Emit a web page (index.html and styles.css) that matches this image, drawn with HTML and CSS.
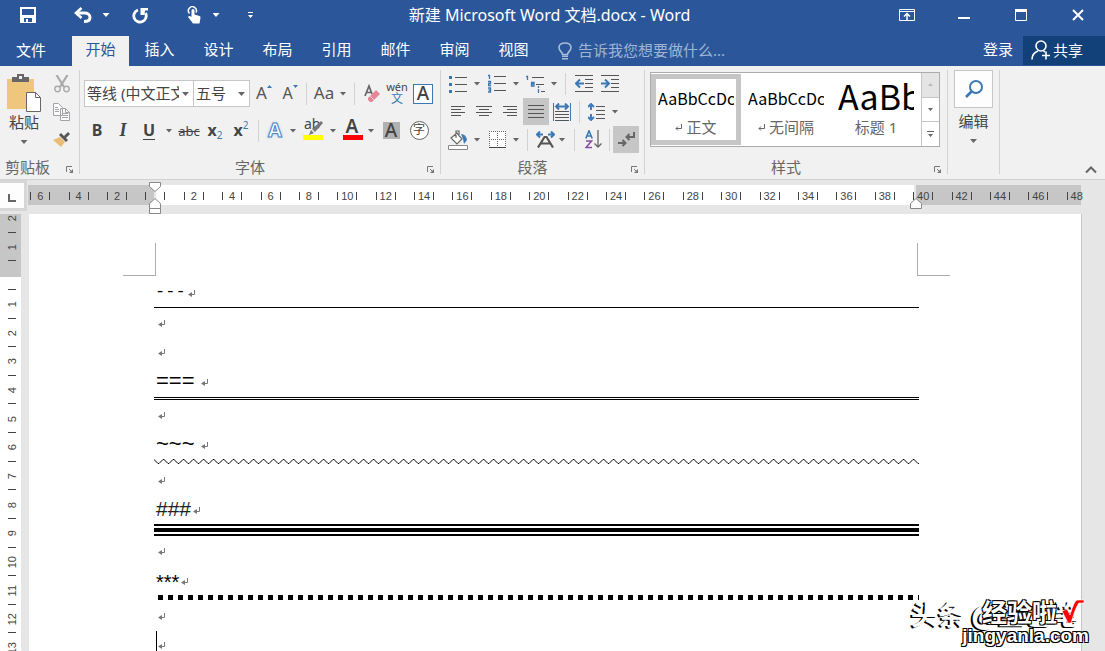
FILE: index.html
```html
<!DOCTYPE html>
<html lang="zh-CN">
<head>
<meta charset="utf-8">
<title>新建 Microsoft Word 文档.docx - Word</title>
<link rel="stylesheet" href="styles.css">
</head>
<body>
<header class="app-head">
  <div class="title-row">
    <div class="quick">
      <button class="b26" aria-label="保存"><svg width="16" height="16" viewBox="0 0 16 16"><path fill="#fff" fill-rule="evenodd" d="M0 0h16v16H0zM2 2v6h12V2zM4 11v4h2v-3h2v3h4v-4z"/></svg></button>
      <button class="b28 gap-l" aria-label="撤消"><svg width="18" height="16" viewBox="0 0 18 16"><path fill="none" stroke="#fff" stroke-width="3" d="M2 6h8.500c3 0 5.500 1.500 5.500 4.500S14 14.500 10 14.500"/><path fill="none" stroke="#fff" stroke-width="2.600" d="M7.500 1 2 6l5.500 5"/></svg></button>
      <button class="b18" aria-label="撤消选项"><span class="caret light"></span></button>
      <button class="b26 gap-s" aria-label="重复"><svg width="17" height="17" viewBox="0 0 17 17"><path fill="none" stroke="#fff" stroke-width="2.800" d="M6 3A6.200 6.200 0 1 0 13.500 6"/><path fill="#fff" d="M8.500 1H16v2.500h-3L12.500 8H8.500z"/></svg></button>
      <button class="b26 gap-l" aria-label="触摸/鼠标模式"><svg width="14" height="18" viewBox="0 0 14 18"><path fill="none" stroke="#fff" stroke-width="1.500" d="M2.500 7.500a4 4 0 1 1 6.500-1"/><path fill="#fff" d="M4.500 4.500a1.500 1.500 0 0 1 3 0v4l5 1.500q1 .4 1 1.500l-1 6H6l-5-6.500q.6-1.500 2-1l1.500 1z"/></svg></button>
      <button class="b18" aria-label="模式选项"><span class="caret light"></span></button>
      <button class="b18 gap-m" aria-label="自定义快速访问工具栏"><svg width="5" height="7" viewBox="0 0 5 7"><path fill="#fff" d="M0 0h5v1H0zM0 3h5L2.500 6z"/></svg></button>
    </div>
    <h1 class="doc-title">新建 Microsoft Word 文档.docx - Word</h1>
    <div class="window-controls">
      <button aria-label="功能区显示选项"><svg width="16" height="12" viewBox="0 0 16 12"><path fill="none" stroke="#fff" d="M.5.5h15v11H.5zM.5 2.500h15"/><path fill="none" stroke="#fff" stroke-width="1.500" d="M8 11V5M5 7.500l3-3 3 3"/></svg></button>
      <button aria-label="最小化"><svg width="12" height="12" viewBox="0 0 12 12"><path fill="#fff" d="M0 8h12v2H0z"/></svg></button>
      <button aria-label="最大化"><svg width="12" height="12" viewBox="0 0 12 12"><path fill="none" stroke="#fff" d="M.5.5h11v11H.5z"/><path fill="#fff" d="M0 0h12v3H0z"/></svg></button>
      <button aria-label="关闭"><svg width="12" height="12" viewBox="0 0 12 12"><path fill="none" stroke="#fff" stroke-width="2" d="M1 1l10 10M11 1 1 11"/></svg></button>
    </div>
  </div>
  <nav class="tab-row">
    <button class="tab file">文件</button>
    <button class="tab active">开始</button>
    <button class="tab">插入</button>
    <button class="tab">设计</button>
    <button class="tab">布局</button>
    <button class="tab">引用</button>
    <button class="tab">邮件</button>
    <button class="tab">审阅</button>
    <button class="tab">视图</button>
    <label class="tell-me">
      <svg width="14" height="18" viewBox="0 0 14 18"><path fill="none" stroke="#a9bcda" stroke-width="1.600" d="M4.500 12.500c0-2.500-3.500-3.500-3.500-7C1 2.800 3.500 1 7 1s6 1.800 6 4.500c0 3.500-3.500 4.500-3.500 7z"/><path fill="#a9bcda" d="M4 13.500h6V15H4zM4 16h6v1.500H4z"/></svg>
      <input type="text" placeholder="告诉我您想要做什么..." aria-label="告诉我您想要做什么">
    </label>
    <button class="sign-in">登录</button>
    <button class="share"><svg width="20" height="20" viewBox="0 0 20 20"><g fill="none" stroke="#fff" stroke-width="1.600"><circle cx="10" cy="6" r="5"/><path d="M1 19.500c0-4.500 2-7 6-8.500M12.500 11l1.500 1M15 11.500v8M11 15.500h8"/></g></svg>共享</button>
  </nav>
</header>

<section class="ribbon" aria-label="开始">
  <div class="group clipboard">
    <div class="body clip-body">
      <button class="tall paste">
        <svg width="35" height="38" viewBox="0 0 35 38"><path fill="#eec77c" d="M0 5h27v30H0z"/><path fill="#666" d="M5 3h5V0h7v3h5v5H5z"/><path fill="#f1f1f1" d="M12 2h3v3h-3z"/><path fill="#fff" stroke="#666" d="M19.500 18.500h9l5 5v14h-14z"/><path fill="none" stroke="#666" d="M28.500 18.500v5h5"/></svg>
        <span>粘贴</span><span class="caret"></span>
      </button>
      <div class="clip-tools">
        <button class="tool" aria-label="剪切"><svg width="16" height="18" viewBox="0 0 16 18"><g fill="none" stroke="#aaa"><path stroke-width="2.200" d="M2.500 0 10 12M13.500 0 6 12"/><circle cx="3.500" cy="14" r="2.700" stroke-width="1.400"/><circle cx="12.500" cy="14" r="2.700" stroke-width="1.400"/></g></svg></button>
        <button class="tool" aria-label="复制"><svg width="17" height="18" viewBox="0 0 17 18"><g fill="#fafafa" stroke="#a5a1a8"><path d="M.5.5h5l4 4v8h-9zM7.500 5.500h5l4 4v8h-9z"/><path fill="none" d="M2 4.500h3M2 6.500h4M2 8.500h4M9 10.500h6M9 12.500h6M9 14.500h6M12.500 5.500v4h4"/></g></svg></button>
        <button class="tool" aria-label="格式刷"><svg width="17" height="16" viewBox="0 0 17 16"><path fill="#e9bd77" d="M0 8 7 5l5 5-4 5z"/><path fill="#555" d="m6 3 2-2 7 7-2 2zM11 4l4-4 2 2-4 4z"/></svg></button>
      </div>
    </div>
    <div class="caption"><span>剪贴板</span><button class="launch" aria-label="剪贴板选项"><svg width="7" height="7" viewBox="0 0 7 7"><path fill="none" stroke="#777" d="M.5 6V.5H6M3 3l2 2"/><path fill="#777" d="M7 3v4H3z"/></svg></button></div>
  </div>

  <div class="group font">
    <div class="body font-body">
      <div class="row">
        <div class="combo family"><select aria-label="字体"><option>等线 (中文正文)</option></select><span class="caret"></span></div>
        <div class="combo size"><select aria-label="字号"><option>五号</option></select><span class="caret"></span></div>
        <button class="b28 letter" aria-label="增大字号">A<svg class="step" width="5" height="3" viewBox="0 0 5 3"><path fill="#3c78b4" d="M0 3 2.500 0 5 3z"/></svg></button>
        <button class="b24 letter small" aria-label="减小字号">A<svg class="step" width="5" height="3" viewBox="0 0 5 3"><path fill="#3c78b4" d="M0 0h5L2.500 3z"/></svg></button>
        <i class="sep s8"></i>
        <button class="b28 letter aa" aria-label="更改大小写">Aa</button><button class="b10" aria-label="大小写选项"><span class="caret"></span></button>
        <i class="sep s12"></i>
        <button class="b24" aria-label="清除格式"><svg width="17" height="19" viewBox="0 0 17 19"><path fill="none" stroke="#666" stroke-width="1.700" d="M1 12 5 2l3 8M2.500 8.500H7"/><path fill="#e78696" d="m4 14 8-8 4 4-8 8H6l-2-2z"/><path stroke="#f6ccd2" d="m6 12 4 4"/></svg></button>
        <button class="b26 pinyin" aria-label="拼音指南"><span>wén</span><b>文</b></button>
        <button class="b26" aria-label="字符边框"><span class="boxed">A</span></button>
      </div>
      <div class="row">
        <button class="b26 glyph bold">B</button>
        <button class="b26 glyph italic">I</button>
        <button class="b26 glyph under">U</button><button class="b14" aria-label="下划线选项"><span class="caret"></span></button>
        <button class="b26 glyph strike">abc</button>
        <button class="b26 glyph script">x<sub>2</sub></button>
        <button class="b26 glyph script">x<sup>2</sup></button>
        <i class="sep s8"></i>
        <button class="b26 glyph effect">A</button><button class="b10" aria-label="文本效果选项"><span class="caret"></span></button>
        <button class="b30 swatch yellow" aria-label="突出显示"><span>ab</span><svg class="pen" width="15" height="15" viewBox="0 0 15 15"><path fill="#777" d="M13 0l2 2-8 9-3-3zM3 9l3 3-5 2z"/></svg></button><button class="b10" aria-label="突出显示选项"><span class="caret"></span></button>
        <button class="b28 swatch red" aria-label="字体颜色"><b>A</b></button><button class="b10" aria-label="字体颜色选项"><span class="caret"></span></button>
        <button class="b30" aria-label="字符底纹"><span class="shade">A</span></button>
        <button class="b26" aria-label="带圈字符"><span class="ring">字</span></button>
      </div>
    </div>
    <div class="caption"><span>字体</span><button class="launch" aria-label="字体选项"><svg width="7" height="7" viewBox="0 0 7 7"><path fill="none" stroke="#777" d="M.5 6V.5H6M3 3l2 2"/><path fill="#777" d="M7 3v4H3z"/></svg></button></div>
  </div>

  <div class="group para">
    <div class="body para-body">
      <div class="row">
        <button class="b26" aria-label="项目符号"><svg width="18" height="18" viewBox="0 0 18 18"><path stroke="#555" d="M6 2.500h12M6 9.500h12M6 16.500h12"/><path fill="#3c78b4" d="M0 1h3v3H0zM0 8h3v3H0zM0 15h3v3H0z"/></svg></button><button class="b12" aria-label="符号选项"><span class="caret"></span></button>
        <button class="b28" aria-label="编号"><svg width="18" height="19" viewBox="0 0 18 19"><path stroke="#555" d="M6 2.500h12M6 9.500h12M6 16.500h12"/><path fill="none" stroke="#3c78b4" stroke-width="1.300" d="M0 1.500h1.500V5M0 7.500h2.500v2H.5v2H3M0 14h2.500v4H0M.5 16h2"/></svg></button><button class="b10" aria-label="编号选项"><span class="caret"></span></button>
        <button class="b28" aria-label="多级列表"><svg width="19" height="18" viewBox="0 0 19 18"><path stroke="#555" d="M6 2.500h12M10 9.500h8M15 16.500h4"/><path fill="none" stroke="#3c78b4" stroke-width="1.300" d="M0 1.500h1.500V5M5 7.500h3V11H5.500V9H8M12.500 14v4M12.500 11v2"/></svg></button><button class="b10" aria-label="列表选项"><span class="caret"></span></button>
        <i class="sep s12"></i>
        <button class="b26" aria-label="减少缩进量"><svg width="18" height="17" viewBox="0 0 18 17"><path stroke="#555" d="M0 .5h18M10 4.500h8M10 8.500h8M10 12.500h8M0 16.500h18"/><path fill="none" stroke="#3c78b4" stroke-width="2" d="M1 8.500h8M5 4.500l-4 4 4 4"/></svg></button>
        <button class="b26" aria-label="增加缩进量"><svg width="18" height="17" viewBox="0 0 18 17"><path stroke="#555" d="M0 .5h18M10 4.500h8M10 8.500h8M10 12.500h8M0 16.500h18"/><path fill="none" stroke="#3c78b4" stroke-width="2" d="M0 8.500h8M4 4.500l4 4-4 4"/></svg></button>
      </div>
      <div class="row">
        <button class="b26" aria-label="左对齐"><svg width="14" height="11" viewBox="0 0 14 11"><path stroke="#555" d="M0 .5h14M0 3.500h10M0 6.500h14M0 9.500h10"/></svg></button>
        <button class="b26" aria-label="居中"><svg width="16" height="11" viewBox="0 0 16 11"><path stroke="#555" d="M0 .5h16M3 3.500h10M0 6.500h16M3 9.500h10"/></svg></button>
        <button class="b26" aria-label="右对齐"><svg width="14" height="11" viewBox="0 0 14 11"><path stroke="#555" d="M0 .5h14M4 3.500h10M0 6.500h14M4 9.500h10"/></svg></button>
        <button class="b26 on" aria-label="两端对齐"><svg width="16" height="14" viewBox="0 0 16 14"><path stroke="#555" d="M0 .5h16M0 4.500h16M0 8.500h16M0 12.500h16"/></svg></button>
        <button class="b26" aria-label="分散对齐"><svg width="18" height="18" viewBox="0 0 18 18"><path stroke="#3c78b4" d="M.5 0v18M17.500 0v18"/><path stroke="#3c78b4" stroke-width="2" fill="none" d="M3 3.500h12M6 .5l-3 3 3 3M12 .5l3 3-3 3"/><path stroke="#555" d="M2 8.500h14M2 11.500h14M2 14.500h14M2 17.500h14"/></svg></button>
        <i class="sep s8"></i>
        <button class="b26" aria-label="行距"><svg width="17" height="18" viewBox="0 0 17 18"><path fill="none" stroke="#3f7cc4" stroke-width="2" d="M3 1v6M3 11v6M0 4l3-3 3 3M0 14l3 3 3-3"/><path stroke="#555" d="M8 3.500h9M8 7.500h9M8 11.500h9M8 15.500h9"/></svg></button><button class="b12" aria-label="行距选项"><span class="caret"></span></button>
      </div>
      <div class="row">
        <button class="b26" aria-label="底纹"><svg width="20" height="20" viewBox="0 0 20 20"><path fill="#fff" stroke="#666" stroke-width="1.200" d="m3 8 6-5 5 6-5 5zM8 8V1h3v5"/><path fill="#3c78b4" d="M13 4q5 0 6 6l-3 4-1-5z"/><path fill="#fff" stroke="#888" d="M.5 15.500h19v4H.5z"/></svg></button><button class="b12" aria-label="底纹选项"><span class="caret"></span></button>
        <button class="b28" aria-label="边框"><svg width="17" height="17" viewBox="0 0 17 17"><path fill="#fff" d="M0 0h17v16H0z"/><path fill="none" stroke="#666" stroke-dasharray="1 1" d="M0 .5h17M.5 0v16M16.500 0v16M8.500 0v16M0 8.500h17"/><path stroke="#444" d="M0 16.500h17"/></svg></button><button class="b10" aria-label="边框选项"><span class="caret"></span></button>
        <i class="sep s12"></i>
        <button class="b24" aria-label="中文版式"><svg width="19" height="17" viewBox="0 0 19 17"><path fill="none" stroke="#3c78b4" stroke-width="2" d="M1 3.500h6M4 .5l-3 3 3 3M12 3.500h6M15 .5l3 3-3 3"/><path fill="none" stroke="#555" stroke-width="2.200" d="M2 16.500 8.500 6h2L17 16.500M5 12.500h9"/></svg></button><button class="b10" aria-label="版式选项"><span class="caret"></span></button>
        <i class="sep s14"></i>
        <button class="b24" aria-label="排序"><svg width="17" height="19" viewBox="0 0 17 19"><path fill="none" stroke="#3c78b4" stroke-width="1.600" d="M.8 8.500 4 .8l3.200 7.700M2 6h4"/><path fill="none" stroke="#8650a8" stroke-width="1.600" d="M1 11h5.500L1 17.500h6"/><path fill="none" stroke="#666" stroke-width="1.300" d="M13 0v17M9.500 13.500 13 17l3.500-3.500"/></svg></button>
        <i class="sep s8"></i>
        <button class="b26 on" aria-label="显示编辑标记"><svg width="17" height="15" viewBox="0 0 17 15"><path fill="none" stroke="#666" stroke-width="2" d="M16 0v5H9M11.500 2 8.500 5l3 3M0 11h7M4.500 8l3 3-3 3"/></svg></button>
      </div>
    </div>
    <div class="caption"><span>段落</span><button class="launch" aria-label="段落选项"><svg width="7" height="7" viewBox="0 0 7 7"><path fill="none" stroke="#777" d="M.5 6V.5H6M3 3l2 2"/><path fill="#777" d="M7 3v4H3z"/></svg></button></div>
  </div>

  <div class="group styles">
    <div class="body">
      <div class="gallery">
        <button class="style-card chosen"><span class="sample">AaBbCcDc</span><span class="style-name"><svg width="7" height="7" viewBox="0 0 7 7"><path fill="none" stroke="#666" d="M6.500 0v4.500H1M3 2.500l-2 2 2 2"/></svg> 正文</span></button>
        <button class="style-card"><span class="sample">AaBbCcDc</span><span class="style-name"><svg width="7" height="7" viewBox="0 0 7 7"><path fill="none" stroke="#666" d="M6.500 0v4.500H1M3 2.500l-2 2 2 2"/></svg> 无间隔</span></button>
        <button class="style-card"><span class="sample big">AaBb</span><span class="style-name">标题 1</span></button>
        <div class="scroller">
          <button class="off" aria-label="上一行"><svg width="5" height="3" viewBox="0 0 5 3"><path fill="#bbb" d="M0 3 2.500 0 5 3z"/></svg></button>
          <button aria-label="下一行"><svg width="5" height="3" viewBox="0 0 5 3"><path fill="#666" d="M0 0h5L2.500 3z"/></svg></button>
          <button aria-label="其他样式"><svg width="7" height="7" viewBox="0 0 7 7"><path fill="#666" d="M0 0h7v1H0zM1 3h5L3.500 6z"/></svg></button>
        </div>
      </div>
    </div>
    <div class="caption"><span>样式</span><button class="launch" aria-label="样式选项"><svg width="7" height="7" viewBox="0 0 7 7"><path fill="none" stroke="#777" d="M.5 6V.5H6M3 3l2 2"/><path fill="#777" d="M7 3v4H3z"/></svg></button></div>
  </div>

  <div class="group editing">
    <button class="tall">
      <span class="find"><svg width="18" height="18" viewBox="0 0 18 18"><g fill="none" stroke="#3c78b4" stroke-width="2"><circle cx="11" cy="7" r="6"/><path stroke-width="2.600" d="M6.500 11.500 1 17"/></g></svg></span>
      <span>编辑</span><span class="caret"></span>
    </button>
  </div>
  <button class="collapse" aria-label="折叠功能区"><svg width="12" height="8" viewBox="0 0 12 8"><path fill="none" stroke="#666" stroke-width="2" d="m1 6.500 5-5 5 5"/></svg></button>
</section>

<div class="ruler-row">
  <div class="corner"><button aria-label="制表符"><svg width="8" height="8" viewBox="0 0 8 8"><path fill="none" stroke="#666" stroke-width="2" d="M1 0v7h7"/></svg></button></div>
  <div class="ruler">
    <div class="zone margin-left"></div>
    <div class="zone text-zone">
      <svg class="marker first" width="12" height="32" viewBox="0 0 12 32"><g fill="#fff" stroke="#888"><path d="M.5.5h11v4l-5.500 5-5.500-5zM.5 26.500v-5l5.500-5 5.500 5v5zM.5 26.500h11v5H.5z"/></g></svg>
      <svg class="marker last" width="12" height="11" viewBox="0 0 12 11"><path fill="#fff" stroke="#888" d="M.5 10.500v-5l5.500-5 5.500 5v5z"/></svg>
    </div>
    <div class="zone margin-right"></div>
    <ol class="scale" id="scale-x"></ol>
  </div>
</div>

<main class="workspace">
  <div class="ruler-y"><ol class="scale-y" id="scale-y"></ol></div>
  <article class="page">
    <div class="crops"><i class="crop left"></i><i class="crop right"></i></div>
    <p class="line ruled dashes">---<svg class="ret"><use href="#ret"/></svg></p>
    <div class="rule single"></div>
    <p class="line"><svg class="ret"><use href="#ret"/></svg></p>
    <p class="line"><svg class="ret"><use href="#ret"/></svg></p>
    <p class="line ruled equals">===<svg class="ret"><use href="#ret"/></svg></p>
    <div class="rule double"></div>
    <p class="line"><svg class="ret"><use href="#ret"/></svg></p>
    <p class="line ruled equals">~~~<svg class="ret"><use href="#ret"/></svg></p>
    <svg class="rule wave"><defs><pattern id="zig" width="10" height="6" patternUnits="userSpaceOnUse"><path fill="none" stroke="#000" d="M-1-.5 0 .5 4 4.500h1l4-4h1l1 1"/></pattern></defs><rect width="100%" height="6" fill="url(#zig)"/></svg>
    <p class="line"><svg class="ret"><use href="#ret"/></svg></p>
    <p class="line ruled hashes">###<svg class="ret"><use href="#ret"/></svg></p>
    <div class="rule triple"></div>
    <p class="line"><svg class="ret"><use href="#ret"/></svg></p>
    <p class="line ruled stars">***<svg class="ret"><use href="#ret"/></svg></p>
    <div class="rule dots"></div>
    <p class="line"><svg class="ret"><use href="#ret"/></svg></p>
    <p class="line current"><svg class="ret"><use href="#ret"/></svg></p>
  </article>
</main>

<div class="watermark" aria-hidden="true">
  <span class="wm-back">头条 @兰已笔</span>
  <span class="wm-name">经验啦</span>
  <svg class="wm-tick" width="24" height="26" viewBox="0 0 24 26"><path fill="#f00" stroke="#fff" stroke-width=".6" d="M1 12l5-2 3 6Q13 2 16 1h7v3h-5Q15 7 10 24H7z"/></svg>
  <span class="wm-site">jingyanla.com</span>
</div>

<svg class="defs" width="0" height="0"><symbol id="ret" viewBox="0 0 8 8"><path fill="none" stroke="#777" d="M6.500 0v4.500H1"/><path fill="#777" d="M4 2v5L0 4.500z"/></symbol></svg>
<script src="rulers.js"></script>
</body>
</html>
```
FILE: rulers.js
```js
const fill = (id, from, to, step) => {
  const list = document.getElementById(id);
  for (let n = from; n <= to; n += step) {
    const item = document.createElement('li');
    const mark = document.createElement('span');
    mark.textContent = n === 0 ? '' : Math.abs(n);
    item.append(mark);
    list.append(item);
  }
};
fill('scale-x', -6, 48, 2);
fill('scale-y', -2, 13, 1);
```
FILE: styles.css
```css
* { box-sizing: border-box; }
body {
  margin: 0;
  height: 100vh;
  display: flex;
  flex-direction: column;
  overflow: hidden;
  position: relative;
  background: #e6e6e6;
  color: #444;
  font: 15px/20px "Noto Sans", "Noto Sans CJK SC", sans-serif;
}
button, input, select { font: inherit; color: inherit; border: 0; padding: 0; margin: 0; background: none; }
button { display: flex; align-items: center; justify-content: center; flex: none; }
svg { flex: none; display: block; }
ol { list-style: none; margin: 0; padding: 0; }

.b10 { width: 10px; } .b12 { width: 12px; } .b14 { width: 14px; } .b18 { width: 18px; }
.b24 { width: 24px; } .b26 { width: 26px; } .b28 { width: 28px; } .b30 { width: 30px; }
.caret { width: 7px; height: 4px; flex: none; background: #666; clip-path: polygon(0 0, 100% 0, 50% 100%); }
.caret.light { background: #fff; }

/* title bar */
.app-head { background: #2b579a; color: #fff; flex: none; }
.title-row { display: grid; grid-template-columns: 1fr auto 1fr; height: 36px; padding-bottom: 8px; }
.quick { display: flex; padding-left: 15px; }
.gap-s { margin-left: 12px; } .gap-m { margin-left: 16px; } .gap-l { margin-left: 28px; }
.doc-title { margin: 0 6px 0 0; font-size: 16px; font-weight: 400; line-height: 30px; }
.window-controls { display: flex; justify-content: flex-end; }
.window-controls button { width: 57px; padding-left: 2px; }

.tab-row { display: flex; height: 30px; gap: 2px; }
.tab { width: 57px; padding-bottom: 4px; }
.tab.file { width: 62px; margin-right: 8px; padding-bottom: 2px; }
.tab.active { background: #f1f1f1; color: #2b579a; }
.tell-me { display: flex; flex: 1; align-items: center; gap: 6px; margin-left: 14px; }
.tell-me input { flex: 1; min-width: 0; outline: 0; padding-bottom: 2px; }
.tell-me input::placeholder { color: #a0b5d5; opacity: 1; }
.sign-in { width: 46px; padding-bottom: 4px; }
.share { width: 82px; height: 29px; background: #124078; gap: 2px; justify-content: flex-start; padding: 0 0 2px 8px; }

/* ribbon */
.ribbon { display: flex; flex: none; height: 114px; padding: 4px 0 5px; background: #f1f1f1; border-bottom: 1px solid #d2d2d2; }
.group { display: flex; flex-direction: column; border-right: 1px solid #d2d2d2; }
.body { flex: 1; }
.row { display: flex; }
.sep { height: 22px; align-self: center; flex: none; background: linear-gradient(#d2d2d2, #d2d2d2) center / 1px 100% no-repeat; }
.s8 { width: 8px; } .s12 { width: 12px; } .s14 { width: 14px; }
.caption { display: flex; height: 12px; line-height: 10px; color: #666; }
.caption span { flex: 1; text-align: center; }
.launch { width: 20px; height: 14px; }
.tall { flex-direction: column; justify-content: flex-start; }
.tall .caret { margin-top: 8px; }

.clipboard { width: 80px; }
.clipboard .caption span { margin-right: 4px; }
.clip-body { display: flex; }
.paste { width: 48px; padding: 4px 0 0 4px; }
.paste svg { margin-right: 3px; }
.paste span { margin-right: 4px; }
.clip-tools { display: flex; flex-direction: column; gap: 1px; }
.tool { width: 27px; height: 27px; }

.font { width: 361px; }
.font-body { padding: 10px 0 0 4px; display: flex; flex-direction: column; gap: 10px; }
.font-body .row { height: 27px; }
.combo { position: relative; flex: none; background: #fff; border: 1px solid #c6c6c6; }
.combo select { appearance: none; outline: 0; width: 100%; height: 100%; padding: 0 14px 2px 2px; overflow: hidden; text-overflow: clip; white-space: nowrap; }
.combo .caret { position: absolute; right: 4px; top: 11px; pointer-events: none; }
.family { width: 110px; }
.size { width: 57px; margin-left: -1px; }
.letter { font-size: 17px; color: #555; padding-bottom: 2px; }
.letter.small { font-size: 16px; }
.letter .step { align-self: flex-start; margin-top: 5px; }
.pinyin { flex-direction: column; font-size: 11px; line-height: 10px; }
.pinyin b { color: #3c78b4; font-size: 12px; line-height: 13px; font-weight: 400; }
.boxed { width: 20px; height: 20px; border: 1px solid #3c78b4; background: #fff; font-size: 19px; line-height: 17px; font-weight: 500; }
.glyph { font-size: 16px; color: #444; padding-bottom: 2px; }
.bold { font-weight: 700; }
.italic { font: italic 700 18px/20px "Liberation Serif", serif; }
.under { font-weight: 700; text-decoration: underline; text-underline-offset: 3px; }
.strike { font-size: 13px; text-decoration: line-through; padding-bottom: 0; }
.script { font-weight: 700; }
.script sub, .script sup { font-size: 10px; line-height: 10px; color: #3c78b4; font-weight: 400; }
.script sub { align-self: flex-end; margin-bottom: 2px; }
.script sup { align-self: flex-start; margin-top: 3px; }
.effect { color: #fff; font-size: 20px; font-weight: 700; -webkit-text-stroke: 1px #4a84c4; text-shadow: 0 0 3px #7fb2e6; }
.swatch { position: relative; align-items: flex-start; font-size: 14px; line-height: 14px; }
.swatch::after { content: ""; position: absolute; left: 5px; top: 18px; width: 20px; height: 5px; background: #ff0; }
.swatch.yellow { justify-content: flex-start; padding-left: 6px; }
.swatch.red::after { background: #f00; }
.swatch b { font-size: 19px; line-height: 18px; font-weight: 600; }
.pen { position: absolute; left: 10px; top: 4px; }
.shade { width: 17px; height: 17px; background: #b1b1b1; font-size: 19px; font-weight: 500; line-height: 16px; }
.ring { width: 19px; height: 19px; border: 1px solid #666; border-radius: 50%; font-size: 12px; line-height: 16px; background: #fff; }

.para { width: 204px; }
.para-body { display: flex; flex-direction: column; gap: 1px; padding-left: 4px; }
.para-body .row { height: 27px; }
.on { background: #c6c6c6; }

.styles { width: 303px; }
.gallery { display: flex; height: 75px; margin: 2px 7px 0 5px; border: 1px solid #ababab; background: #fff; }
.style-card { flex: 1; min-width: 0; height: 71px; flex-direction: column; justify-content: flex-start; border: 5px solid transparent; margin-top: 1px; padding: 0 2px; }
.style-card.chosen { border-color: #c6c6c6; }
.sample { width: 100%; height: 38px; line-height: 38px; font-family: "Noto Sans CJK SC", sans-serif; font-size: 16px; color: #000; overflow: hidden; white-space: nowrap; text-align: left; }
.sample.big { font-size: 34px; line-height: 34px; }
.style-name { display: flex; align-items: center; gap: 4px; color: #666; }
.scroller { width: 18px; display: flex; flex-direction: column; border-left: 1px solid #c6c6c6; }
.scroller button { flex: 1; }
.scroller button + button { border-top: 1px solid #c6c6c6; }
.scroller .off { background: #e4e4e4; }

.editing { width: 52px; align-items: center; }
.find { display: flex; align-items: center; justify-content: center; width: 39px; height: 38px; margin-bottom: 3px; border: 1px solid #c6c6c6; background: #fdfdfd; }
.collapse { margin: auto 8px 0 auto; }

/* rulers */
.ruler-row { display: flex; flex: none; height: 34px; }
.corner { width: 28px; height: 31px; padding: 3px 4px 3px 0; background: #d6d6d6; flex: none; border-right: 1px solid #e6e6e6; }
.corner button { width: 24px; height: 25px; background: #fdfdfd; padding-top: 4px; }
.ruler { position: relative; display: flex; flex: 1; gap: 2px; padding: 5px 24px 9px 0; }
.zone { background: #c6c6c6; }
.margin-left { width: 126px; }
.margin-right { width: 165px; }
.text-zone { position: relative; flex: 1; background: #fff; }
.marker { position: absolute; z-index: 1; }
.first { left: -7px; top: -3px; }
.last { right: -8px; top: 13px; }
.scale { position: absolute; left: -7px; right: 9px; top: 12px; display: flex; font: 11px/9px "Liberation Sans", Arial, sans-serif; }
.scale li { flex: 1; display: flex; justify-content: center; }
.scale span { width: 20px; height: 8px; border: solid #444; border-width: 0 1px; text-align: center; }
.scale li:last-child span { border-right-color: transparent; }

.workspace { display: flex; flex: 1; min-height: 0; gap: 8px; }
.ruler-y { position: relative; width: 21px; flex: none; overflow: hidden; background: linear-gradient(#c6c6c6 63px, #fff 63px); }
.scale-y { height: 458px; margin-top: -10px; display: flex; flex-direction: column; font: 11px/12px "Liberation Sans", Arial, sans-serif; }
.scale-y li { flex: 1; display: flex; align-items: center; justify-content: center; padding-left: 3px; background: linear-gradient(#444, #444) 8px 100% / 8px 1px no-repeat; }
.scale-y span { writing-mode: vertical-rl; transform: rotate(180deg); }

/* document */
.page { flex: 1; min-width: 0; margin-right: 23px; padding: 29px 162px 0 125px; background: #fff; border-right: 1px solid #c6c6c6; overflow: hidden; color: #000; }
.crops { display: flex; justify-content: space-between; margin: 0 -31px 1px; }
.crop { width: 33px; height: 33px; border: solid #ababab; border-width: 0 0 1px; }
.crop.left { border-right-width: 1px; }
.crop.right { border-left-width: 1px; }
.line { display: flex; align-items: center; height: 29px; margin: 0; padding-left: 4px; gap: 2px; }
.line.ruled { height: 30px; padding-left: 2px; }
.ret { width: 8px; height: 8px; margin-top: 3px; }
.line.dashes { font: 17px/20px "Liberation Mono", monospace; padding-left: 1px; }
.equals { font: 22px/26px "Liberation Sans", sans-serif; gap: 6px; }
.hashes { font: 21px/26px "Liberation Sans", sans-serif; color: #222; }
.stars { font: 20px/24px "Liberation Sans", sans-serif; padding-top: 4px; }
.stars .ret { margin-top: 0; }
.rule { display: block; width: 100%; }
.single { height: 1px; background: #000; }
.double { height: 4px; background: linear-gradient(#fff 1px, #000 1px 2px, #fff 2px 3px, #000 3px); }
.wave { height: 6px; }
.triple { height: 12px; background: linear-gradient(#000 2px, #fff 2px 4px, #000 4px 8px, #fff 8px 10px, #000 10px); }
.dots { height: 6px; background: repeating-linear-gradient(90deg, #fff 0 4px, #000 4px 9px, #fff 9px 10px); border-bottom: 1px solid #fff; }
.current::before { content: ""; align-self: stretch; width: 1px; margin: 1px -1px 0 -2px; background: #000; }

/* stamp over the lower right corner */
.watermark { position: absolute; right: 16px; bottom: 4px; width: 178px; height: 46px; color: #fff; pointer-events: none; white-space: nowrap; }
.watermark > * { position: absolute; }
.wm-back { left: 0; top: -2px; font: 700 27px/30px "Noto Sans CJK SC", sans-serif; text-shadow: -2px 1px 0 #000; }
.wm-name, .wm-site { text-shadow: -1px -1px 0 #000, 1px -1px 0 #000, -1px 1px 0 #000, 1px 1px 0 #000; }
.wm-name { right: 32px; top: -4px; font: 700 25px/28px "Noto Sans CJK SC", sans-serif; }
.wm-tick { right: 4px; top: -2px; }
.wm-site { right: 0; bottom: 0; font: 700 19px/22px "Liberation Sans", sans-serif; }
.defs { position: absolute; }
```
